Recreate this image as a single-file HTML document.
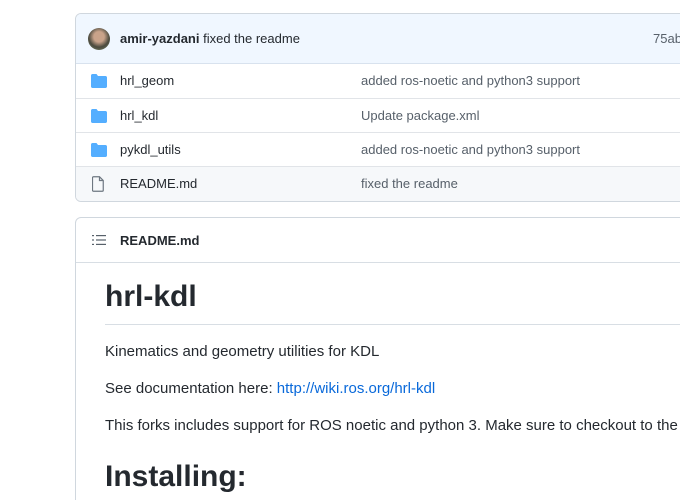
<!DOCTYPE html><html style="overflow:hidden"><head><style>
body{margin:0;background:#fff;font-family:"Liberation Sans",sans-serif;color:#24292f;width:680px;height:500px;overflow:hidden;position:relative}
.box{position:absolute;left:75px;width:640px;border:1px solid #d0d7de;border-radius:6px;overflow:hidden}
.hd{height:49px;background:#f0f7ff;border-bottom:1px solid #d8e2ee;position:relative;font-size:13px}
.row{height:33px;border-top:1px solid #e1e4e8;position:relative;font-size:13px}
.t{position:absolute;top:9px}
.ic{position:absolute;left:15px;top:10px}
a{color:#0969da;text-decoration:none}
.p{position:absolute;left:29px;font-size:15px;white-space:nowrap}
</style></head><body>
<div class="box" style="top:13px;height:187px">
<div class="hd">
<div style="position:absolute;left:12px;top:14px;width:22px;height:22px;border-radius:50%;background:radial-gradient(circle at 50% 40%,#c9a38a 30%,#4b4a3e 60%,#7d8a6a)"></div>
<span class="t" style="left:44px;top:17px"><b>amir-yazdani</b> fixed the readme</span>
<span class="t" style="left:577px;top:17px;color:#57606a">75ab</span>
</div>
<div class="row" style="border-top:none;height:34px"><svg class="ic" width="16" height="14" viewBox="0 0 16 14"><path d="M0 1.5C0 .7.7 0 1.5 0h4l1.5 2h7.5c.8 0 1.5.7 1.5 1.5v9c0 .8-.7 1.5-1.5 1.5h-13C.7 14 0 13.3 0 12.5z" fill="#54aeff"/></svg><span class="t" style="left:44px">hrl_geom</span><span class="t" style="left:285px;color:#57606a">added ros-noetic and python3 support</span></div>
<div class="row"><svg class="ic" width="16" height="14" viewBox="0 0 16 14"><path d="M0 1.5C0 .7.7 0 1.5 0h4l1.5 2h7.5c.8 0 1.5.7 1.5 1.5v9c0 .8-.7 1.5-1.5 1.5h-13C.7 14 0 13.3 0 12.5z" fill="#54aeff"/></svg><span class="t" style="left:44px">hrl_kdl</span><span class="t" style="left:285px;color:#57606a">Update package.xml</span></div>
<div class="row"><svg class="ic" width="16" height="14" viewBox="0 0 16 14"><path d="M0 1.5C0 .7.7 0 1.5 0h4l1.5 2h7.5c.8 0 1.5.7 1.5 1.5v9c0 .8-.7 1.5-1.5 1.5h-13C.7 14 0 13.3 0 12.5z" fill="#54aeff"/></svg><span class="t" style="left:44px">pykdl_utils</span><span class="t" style="left:285px;color:#57606a">added ros-noetic and python3 support</span></div>
<div class="row" style="background:#f6f8fa;height:40px"><svg class="ic" style="left:16px;top:9px" width="12" height="16" viewBox="0 0 12 16"><path d="M1.5.75h6l3.75 3.75v9.75a1 1 0 0 1-1 1H1.5a1 1 0 0 1-1-1V1.75a1 1 0 0 1 1-1zM7.5.75V4.5h3.75" fill="none" stroke="#6e7781" stroke-width="1.2"/></svg><span class="t" style="left:44px">README.md</span><span class="t" style="left:285px;color:#57606a">fixed the readme</span></div>
</div>
<div class="box" style="top:217px;height:320px">
<div style="height:44px;border-bottom:1px solid #d8dee4;position:relative;font-size:13px">
<svg style="position:absolute;left:16px;top:16px" width="14" height="12" viewBox="0 0 14 12"><g fill="#57606a"><rect x="0" y="1" width="2" height="1.2"/><rect x="0" y="5.4" width="2" height="1.2"/><rect x="0" y="9.8" width="2" height="1.2"/><rect x="4" y="1" width="10" height="1.2"/><rect x="4" y="5.4" width="10" height="1.2"/><rect x="4" y="9.8" width="10" height="1.2"/></g></svg>
<b class="t" style="left:44px;top:15px">README.md</b></div>
<div style="position:absolute;left:29px;top:62px;font-size:30px;font-weight:bold">hrl-kdl</div>
<div style="position:absolute;left:29px;top:106px;width:620px;border-top:1px solid #d8dee4"></div>
<div class="p" style="top:125px">Kinematics and geometry utilities for KDL</div>
<div class="p" style="top:162px">See documentation here: <a>http://wiki.ros.org/hrl-kdl</a></div>
<div class="p" style="top:199px">This forks includes support for ROS noetic and python 3. Make sure to checkout to the 'n</div>
<div style="position:absolute;left:29px;top:242px;font-size:30px;font-weight:bold">Installing:</div>
</div>
</body></html>
